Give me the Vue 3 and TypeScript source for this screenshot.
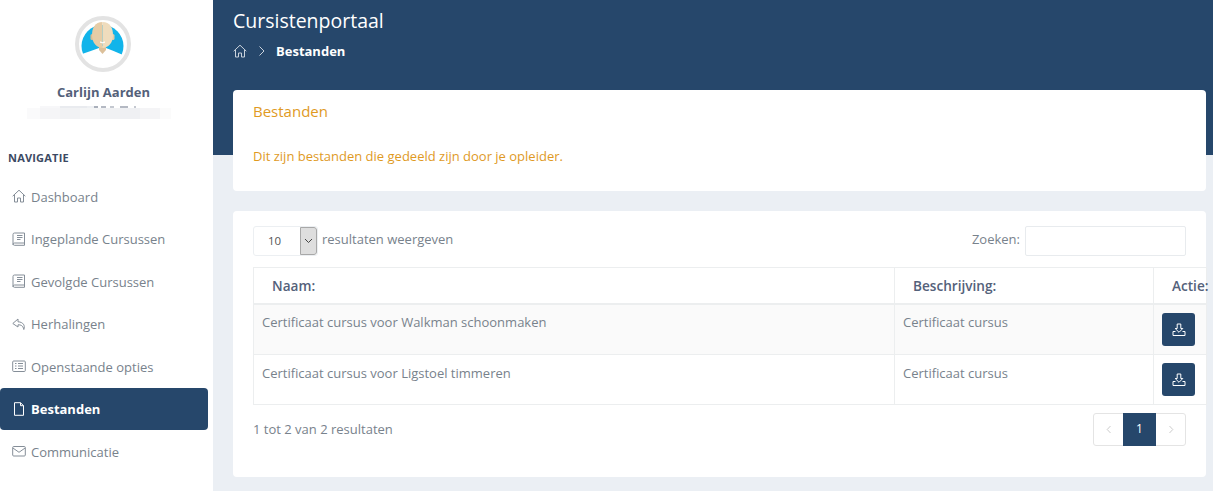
<script setup lang="ts">
interface NavItem { label: string; icon: string; active?: boolean }
const nav: NavItem[] = [
  { label: 'Dashboard', icon: 'home' },
  { label: 'Ingeplande Cursussen', icon: 'book' },
  { label: 'Gevolgde Cursussen', icon: 'book' },
  { label: 'Herhalingen', icon: 'reply' },
  { label: 'Openstaande opties', icon: 'list' },
  { label: 'Bestanden', icon: 'file', active: true },
  { label: 'Communicatie', icon: 'mail' },
]
const rows = [
  { name: 'Certificaat cursus voor Walkman schoonmaken', desc: 'Certificaat cursus' },
  { name: 'Certificaat cursus voor Ligstoel timmeren', desc: 'Certificaat cursus' },
]
const blurBlocks = [
  { w: 13, c: '#fafafb' }, { w: 20, c: '#f5f5f7' }, { w: 20, c: '#f1f2f4' }, { w: 20, c: '#f4f5f6' },
  { w: 20, c: '#f0f1f3' }, { w: 20, c: '#eff0f3' }, { w: 20, c: '#f4f4f6' }, { w: 11, c: '#fbfbfb' },
]
const specks = [
  { w: 20, c: '#f7f7f9' }, { w: 27, c: '#e9ebef' }, { w: 7, c: '#eef0f3' }, { w: 4, c: '#aab0bb' },
  { w: 3, c: '#fff' }, { w: 5, c: '#b4b9c3' }, { w: 4, c: '#fff' }, { w: 4, c: '#c4c8d0' },
  { w: 6, c: '#fff' }, { w: 8, c: '#b4b9c3' }, { w: 6, c: '#fff' }, { w: 2, c: '#c4c8d0' },
]
</script>

<template>
  <div class="page">
    <aside class="sidebar">
      <div class="avatar">
        <svg width="56" height="56" viewBox="0 0 56 56">
          <defs><clipPath id="av"><circle cx="28" cy="28" r="24" /></clipPath></defs>
          <circle cx="28" cy="28" r="24" fill="#fff" />
          <g clip-path="url(#av)">
            <circle cx="27.500" cy="30" r="21" fill="#12b4ea" />
            <path d="M2 41 L7 38 Q16 35 24 32 L31 32 Q39 35 48 39 L54 42 L54 56 L2 56 Z" fill="#fff" />
            <path d="M24 30 L31 30 L31 34 L27.500 38 L24 34 Z" fill="#dcc09a" />
            <rect x="15.500" y="18" width="3" height="6" rx="1.500" fill="#d8bb92" />
            <rect x="36.500" y="18" width="3" height="6" rx="1.500" fill="#e6cca6" />
            <path d="M27.500 6 C20 6 17 12 17 19 C17 27 22 32 27.500 32 Z" fill="#e6cca6" />
            <path d="M27.500 6 C35 6 38 12 38 19 C38 27 33 32 27.500 32 Z" fill="#efdcbd" />
            <path d="M25 26 Q27.500 28 30 26 Q27.500 27 25 26 Z" fill="#fff" stroke="#fff" stroke-width=".8" />
          </g>
          <circle cx="28" cy="28" r="26" fill="none" stroke="#e3e3e3" stroke-width="4" />
        </svg>
      </div>
      <div class="user">Carlijn Aarden</div>
      <div class="blur-top">
        <span v-for="(b, i) in specks" :key="i" :style="{ width: b.w + 'px', background: b.c }"></span>
      </div>
      <div class="blur">
        <span v-for="(b, i) in blurBlocks" :key="i" :style="{ width: b.w + 'px', background: b.c }"></span>
      </div>
      <div class="nav-title">NAVIGATIE</div>
      <nav class="nav">
        <a v-for="item in nav" :key="item.label" class="nav-item" :class="{ active: item.active }">
          <svg class="nav-icon" width="14" height="14" viewBox="0 0 14 14" fill="none" stroke="currentColor" stroke-width="1" stroke-linejoin="round">
            <template v-if="item.icon === 'home'">
              <path d="M.7 7.200 7 1.200l6.300 6" />
              <path d="M2.500 6v7h3V9h3v4h3V6" />
            </template>
            <template v-else-if="item.icon === 'book'">
              <path d="M2.500 1h10v10h-10A1.500 1.500 0 0 0 1 12.500v-10A1.500 1.500 0 0 1 2.500 1Z" />
              <path d="M1 12a1.500 1.500 0 0 0 1.500 1.300h10V11" />
              <path d="M5 3.500h5.500M5 5.500h5.500M5 7.500h3.500" />
            </template>
            <template v-else-if="item.icon === 'reply'">
              <path d="M6 2 .8 6.500 6 10V7.800c3 0 5 .8 5.800 4.700 1.500-4-.5-7.500-5.800-7.700Z" />
            </template>
            <template v-else-if="item.icon === 'list'">
              <rect x=".7" y="2" width="12.600" height="10.500" rx="1" />
              <path d="M3 4.500h1.500M3 7h1.500M3 9.500h1.500M6 4.500h5M6 7h5M6 9.500h5" />
            </template>
            <template v-else-if="item.icon === 'file'">
              <path d="M2.500.7h6l3 3v9.600h-9Z" />
              <path d="M8.500.7v3h3" />
            </template>
            <template v-else>
              <rect x=".7" y="2.500" width="12.600" height="9.500" rx="1" />
              <path d="M.9 4 7 8.300 13.100 4" />
            </template>
          </svg>
          <span>{{ item.label }}</span>
        </a>
      </nav>
    </aside>

    <main class="main">
      <h1 class="title">Cursistenportaal</h1>
      <div class="crumbs">
        <svg width="14" height="14" viewBox="0 0 14 14" fill="none" stroke="currentColor" stroke-width="1" stroke-linejoin="round">
          <path d="M.7 7.200 7 1.200l6.300 6" />
          <path d="M2.500 6v7h3V9h3v4h3V6" />
        </svg>
        <svg class="chev" width="8" height="12" viewBox="0 0 8 12" fill="none" stroke="currentColor" stroke-width="1">
          <path d="M1.500 1.500 6 6l-4.500 4.500" />
        </svg>
        <strong>Bestanden</strong>
      </div>

      <section class="card intro">
        <h2>Bestanden</h2>
        <p>Dit zijn bestanden die gedeeld zijn door je opleider.</p>
      </section>

      <section class="card list">
        <div class="controls">
          <div class="length">
            <div class="select">
              <span class="select-val">10</span>
              <span class="select-btn">
                <svg width="9" height="6" viewBox="0 0 9 6" fill="none" stroke="#444" stroke-width="1"><path d="M1 1l3.500 3.500L8 1" /></svg>
              </span>
            </div>
            <span>resultaten weergeven</span>
          </div>
          <label class="search">
            <span>Zoeken:</span>
            <input type="text" />
          </label>
        </div>

        <table class="table">
          <colgroup>
            <col class="col-a" />
            <col class="col-b" />
            <col class="col-c" />
          </colgroup>
          <thead>
            <tr>
              <th>Naam:</th>
              <th>Beschrijving:</th>
              <th>Actie:</th>
            </tr>
          </thead>
          <tbody>
            <tr v-for="r in rows" :key="r.name">
              <td>{{ r.name }}</td>
              <td>{{ r.desc }}</td>
              <td>
                <button class="dl" type="button" aria-label="Download">
                  <svg width="14" height="14" viewBox="0 0 14 14" fill="none" stroke="#fff" stroke-width="1" stroke-linejoin="round">
                    <path d="M5.200 1h3.600v4.500h2L7 9.300 3.200 5.500h2Z" />
                    <path d="M3.500 8.500H1v4h12v-4h-2.500" />
                  </svg>
                </button>
              </td>
            </tr>
          </tbody>
        </table>

        <div class="foot">
          <span>1 tot 2 van 2 resultaten</span>
          <div class="pager">
            <span class="pg">
              <svg width="6" height="9" viewBox="0 0 6 9" fill="none" stroke="#ccc" stroke-width="1"><path d="M4.500 1 1.200 4.500 4.500 8" /></svg>
            </span>
            <span class="pg current">1</span>
            <span class="pg">
              <svg width="6" height="9" viewBox="0 0 6 9" fill="none" stroke="#ccc" stroke-width="1"><path d="M1.500 1l3.300 3.500L1.500 8" /></svg>
            </span>
          </div>
        </div>
      </section>
    </main>
  </div>
</template>

<style>
html, body { margin: 0; overflow: hidden; }
</style>

<style scoped>
.page {
  display: flex;
  width: 1213px;
  height: 491px;
  overflow: hidden;
  font-family: "Open Sans", "Noto Sans", sans-serif;
  font-size: 13px;
  color: #78828c;
}
.sidebar {
  flex: 0 0 213px;
  background: #fff;
  box-sizing: border-box;
  padding-right: 5px;
}
.avatar { display: flex; justify-content: center; padding: 16px 2px 0 0; }
.avatar svg { display: block; }
.user {
  margin-top: 11px;
  padding-right: 1px;
  text-align: center;
  font-weight: 700;
  font-size: 13px;
  line-height: 18px;
  color: #54617a;
}
.blur-top {
  display: flex;
  height: 2px;
  margin: 5px 0 0 40px;
}
.blur {
  display: flex;
  height: 11px;
  margin: 0 0 0 27px;
}
.nav-title {
  margin: 31px 0 0 8px;
  font-size: 11px;
  line-height: 16px;
  font-weight: 700;
  color: #3c4a63;
  letter-spacing: .2px;
}
.nav { margin-top: 9px; }
.nav-item {
  display: flex;
  align-items: center;
  gap: 5px;
  height: 42.500px;
  padding-left: 12px;
  border-radius: 4px;
  color: #78828c;
}
.nav-item span { position: relative; top: .5px; }
.nav-icon { color: #858e98; flex: none; }
.nav-item.active {
  background: #26476b;
  color: #fff;
  font-weight: 700;
}
.nav-item.active .nav-icon { color: #fff; }
.main {
  flex: 1;
  min-width: 0;
  box-sizing: border-box;
  padding: 0 7px 0 20px;
  background: linear-gradient(#26476b 155px, #ebeff4 155px);
}
.title {
  margin: 0;
  padding-top: 7px;
  font-size: 19.500px;
  line-height: 28px;
  font-weight: 400;
  color: #fff;
}
.crumbs {
  display: flex;
  align-items: center;
  height: 20px;
  margin-top: 6px;
  color: #c9d2dc;
}
.chev { margin-left: 11px; }
.crumbs strong { margin-left: 10px; color: #fff; font-size: 13px; }
.card { background: #fff; border-radius: 4px; }
.intro {
  box-sizing: border-box;
  height: 101px;
  margin-top: 29px;
  padding: 11px 20px;
  color: #e09a1f;
}
.intro h2 { margin: 0; font-size: 15px; line-height: 20px; font-weight: 400; }
.intro p { margin: 26px 0 0; font-size: 13px; line-height: 18px; }
.list {
  box-sizing: border-box;
  height: 266px;
  margin-top: 20px;
  padding: 15px 20px;
  font-size: 13px;
}
.controls { display: flex; justify-content: space-between; height: 30px; }
.length { display: flex; align-items: flex-start; gap: 4px; line-height: 27px; }
.select {
  display: flex;
  width: 65px;
  height: 30px;
  box-sizing: border-box;
  border: 1px solid #eceff2;
  border-radius: 3px;
  overflow: hidden;
}
.select-val { flex: 1; padding-left: 14px; font-size: 11.500px; line-height: 27px; color: #555; }
.select-btn {
  flex: none;
  display: flex;
  align-items: center;
  justify-content: center;
  width: 17px;
  box-sizing: border-box;
  border: 1px solid #a8a8a8;
  border-radius: 0 3px 3px 0;
  background: #dedede;
}
.search { display: flex; gap: 5px; line-height: 27px; }
.search input {
  width: 161px;
  height: 30px;
  box-sizing: border-box;
  border: 1px solid #e8ebee;
  border-radius: 2px;
  outline: none;
  background: #fff;
}
.table {
  display: table;
  margin-top: 11px;
  width: 953px;
  table-layout: fixed;
  border-collapse: collapse;
}
.col-a { width: 641px; }
.col-b { width: 259px; }
.col-c { width: 53px; }
.table th, .table td { border: 1px solid #eceeef; text-align: left; font-weight: 400; }
.table th {
  height: 35px;
  padding: 0 0 0 18px;
  border-bottom-width: 2px;
  font-weight: 600;
  font-size: 13.600px;
  color: #54617a;
  white-space: nowrap;
}
.table td {
  height: 50.500px;
  box-sizing: border-box;
  padding: 0 8px;
  vertical-align: top;
  line-height: 17px;
}
.table td:not(:last-child) { padding-top: 9px; }
.table tbody tr:last-child td { height: 49.500px; }
.table tbody tr:last-child td:not(:last-child) { padding-top: 10px; }
.table tbody tr:first-child { background: #fafafa; }
.dl {
  display: flex;
  align-items: center;
  justify-content: center;
  width: 33px;
  height: 33px;
  margin-top: 8px;
  padding: 0;
  border: 0;
  border-radius: 3px;
  background: #26476b;
}
.foot {
  display: flex;
  justify-content: space-between;
  margin-top: 8px;
  line-height: 32px;
}
.pager {
  display: flex;
  height: 33px;
  box-sizing: border-box;
  border: 1px solid #e4e4e4;
  border-radius: 3px;
}
.pg {
  display: flex;
  align-items: center;
  justify-content: center;
  width: 29px;
  font-size: 12px;
}
.pg.current {
  width: 33px;
  margin: -1px 0;
  background: #26476b;
  color: #fff;
  font-weight: 400;
}
</style>
